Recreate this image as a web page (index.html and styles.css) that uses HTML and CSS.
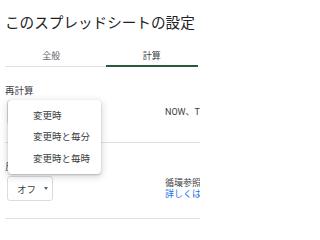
FILE: index.html
```html
<!DOCTYPE html>
<html lang="ja">
<head>
<meta charset="utf-8">
<link rel="stylesheet" href="styles.css">
</head>
<body>
<div class="dialog">
  <h1 class="title">このスプレッドシートの設定</h1>
  <div class="tabs">
    <div class="tab">全般</div>
    <div class="tab active">計算</div>
  </div>
  <section class="section">
    <div class="label">再計算</div>
    <div class="row">
      <div class="select"><span class="value">変更時</span><i class="caret"></i></div>
      <div class="desc">NOW、TODAY、RAND、RANDBETWEEN の再計算の頻度</div>
    </div>
  </section>
  <section class="section">
    <div class="label">反復計算</div>
    <div class="row">
      <div class="select"><span class="value">オフ</span><i class="caret"></i></div>
      <div class="desc">
        <div>循環参照を含む数式の計算の頻度</div>
        <div class="link">詳しくはこちら</div>
      </div>
    </div>
  </section>
  <ul class="menu">
    <li class="item">変更時</li>
    <li class="item">変更時と毎分</li>
    <li class="item">変更時と毎時</li>
  </ul>
</div>
</body>
</html>
```
FILE: styles.css
```css
html, body {
  margin: 0;
  background: #fff;
  overflow: hidden;
}
body {
  width: 200px;
  height: 238px;
  font-family: Roboto, "Noto Sans CJK JP", sans-serif;
  color: #3c4043;
}
.dialog {
  position: relative;
  width: 200px;
  height: 238px;
  overflow: hidden;
  box-sizing: border-box;
  padding: 0 2px 0 5px;
}
.title {
  margin: 12px 0 0;
  font-family: "Noto Sans CJK JP", sans-serif;
  font-weight: 400;
  font-size: 14.6px;
  line-height: 20px;
  color: #202124;
  white-space: nowrap;
}
.tabs {
  display: flex;
  gap: 8px;
  margin-top: 14px;
  border-bottom: 1px solid #e0e0e0;
}
.tab {
  flex: 1;
  height: 19px;
  display: flex;
  align-items: center;
  justify-content: center;
  font-size: 9px;
  color: #5f6368;
  border-bottom: 2px solid transparent;
  margin-bottom: -1px;
}
.tab.active {
  border-bottom-color: #2a5b39;
  color: #3c4043;
}
.section {
  padding: 18px 0 17px;
  border-bottom: 1px solid #e0e0e0;
  margin-right: -2px;
}
.label {
  font-size: 9.5px;
  line-height: 12px;
  margin-bottom: 3px;
  color: #3c4043;
  white-space: nowrap;
}
.row {
  display: grid;
  grid-template-columns: 160px 1fr;
  align-items: center;
  min-width: 0;
}
.select {
  margin-left: 2px;
  width: 35px;
  height: 23px;
  border: 1px solid #dadce0;
  border-radius: 3px;
  display: flex;
  align-items: center;
  padding-left: 9px;
  box-sizing: content-box;
  font-size: 9.5px;
  color: #3c4043;
  overflow: hidden;
}
.value {
  white-space: nowrap;
}
.caret {
  flex: none;
  margin-left: 8px;
  width: 0;
  height: 0;
  border-left: 2.5px solid transparent;
  border-right: 2.5px solid transparent;
  border-top: 3px solid #5f6368;
}
.desc {
  font-size: 9px;
  line-height: 11px;
  white-space: nowrap;
  color: #3c4043;
  min-width: 0;
  overflow: hidden;
}
.link {
  color: #1a73e8;
}
.menu {
  position: absolute;
  left: 8px;
  top: 100px;
  width: 93px;
  margin: 0;
  padding: 4px 0 5px;
  list-style: none;
  background: #fff;
  border-radius: 4px;
  box-shadow: 0 1px 2px rgba(60, 64, 67, 0.3), 0 2px 6px 2px rgba(60, 64, 67, 0.15);
  box-sizing: border-box;
}
.item {
  height: 21.5px;
  display: flex;
  align-items: center;
  padding-left: 25px;
  font-size: 9.5px;
  color: #3c4043;
  white-space: nowrap;
}
```
